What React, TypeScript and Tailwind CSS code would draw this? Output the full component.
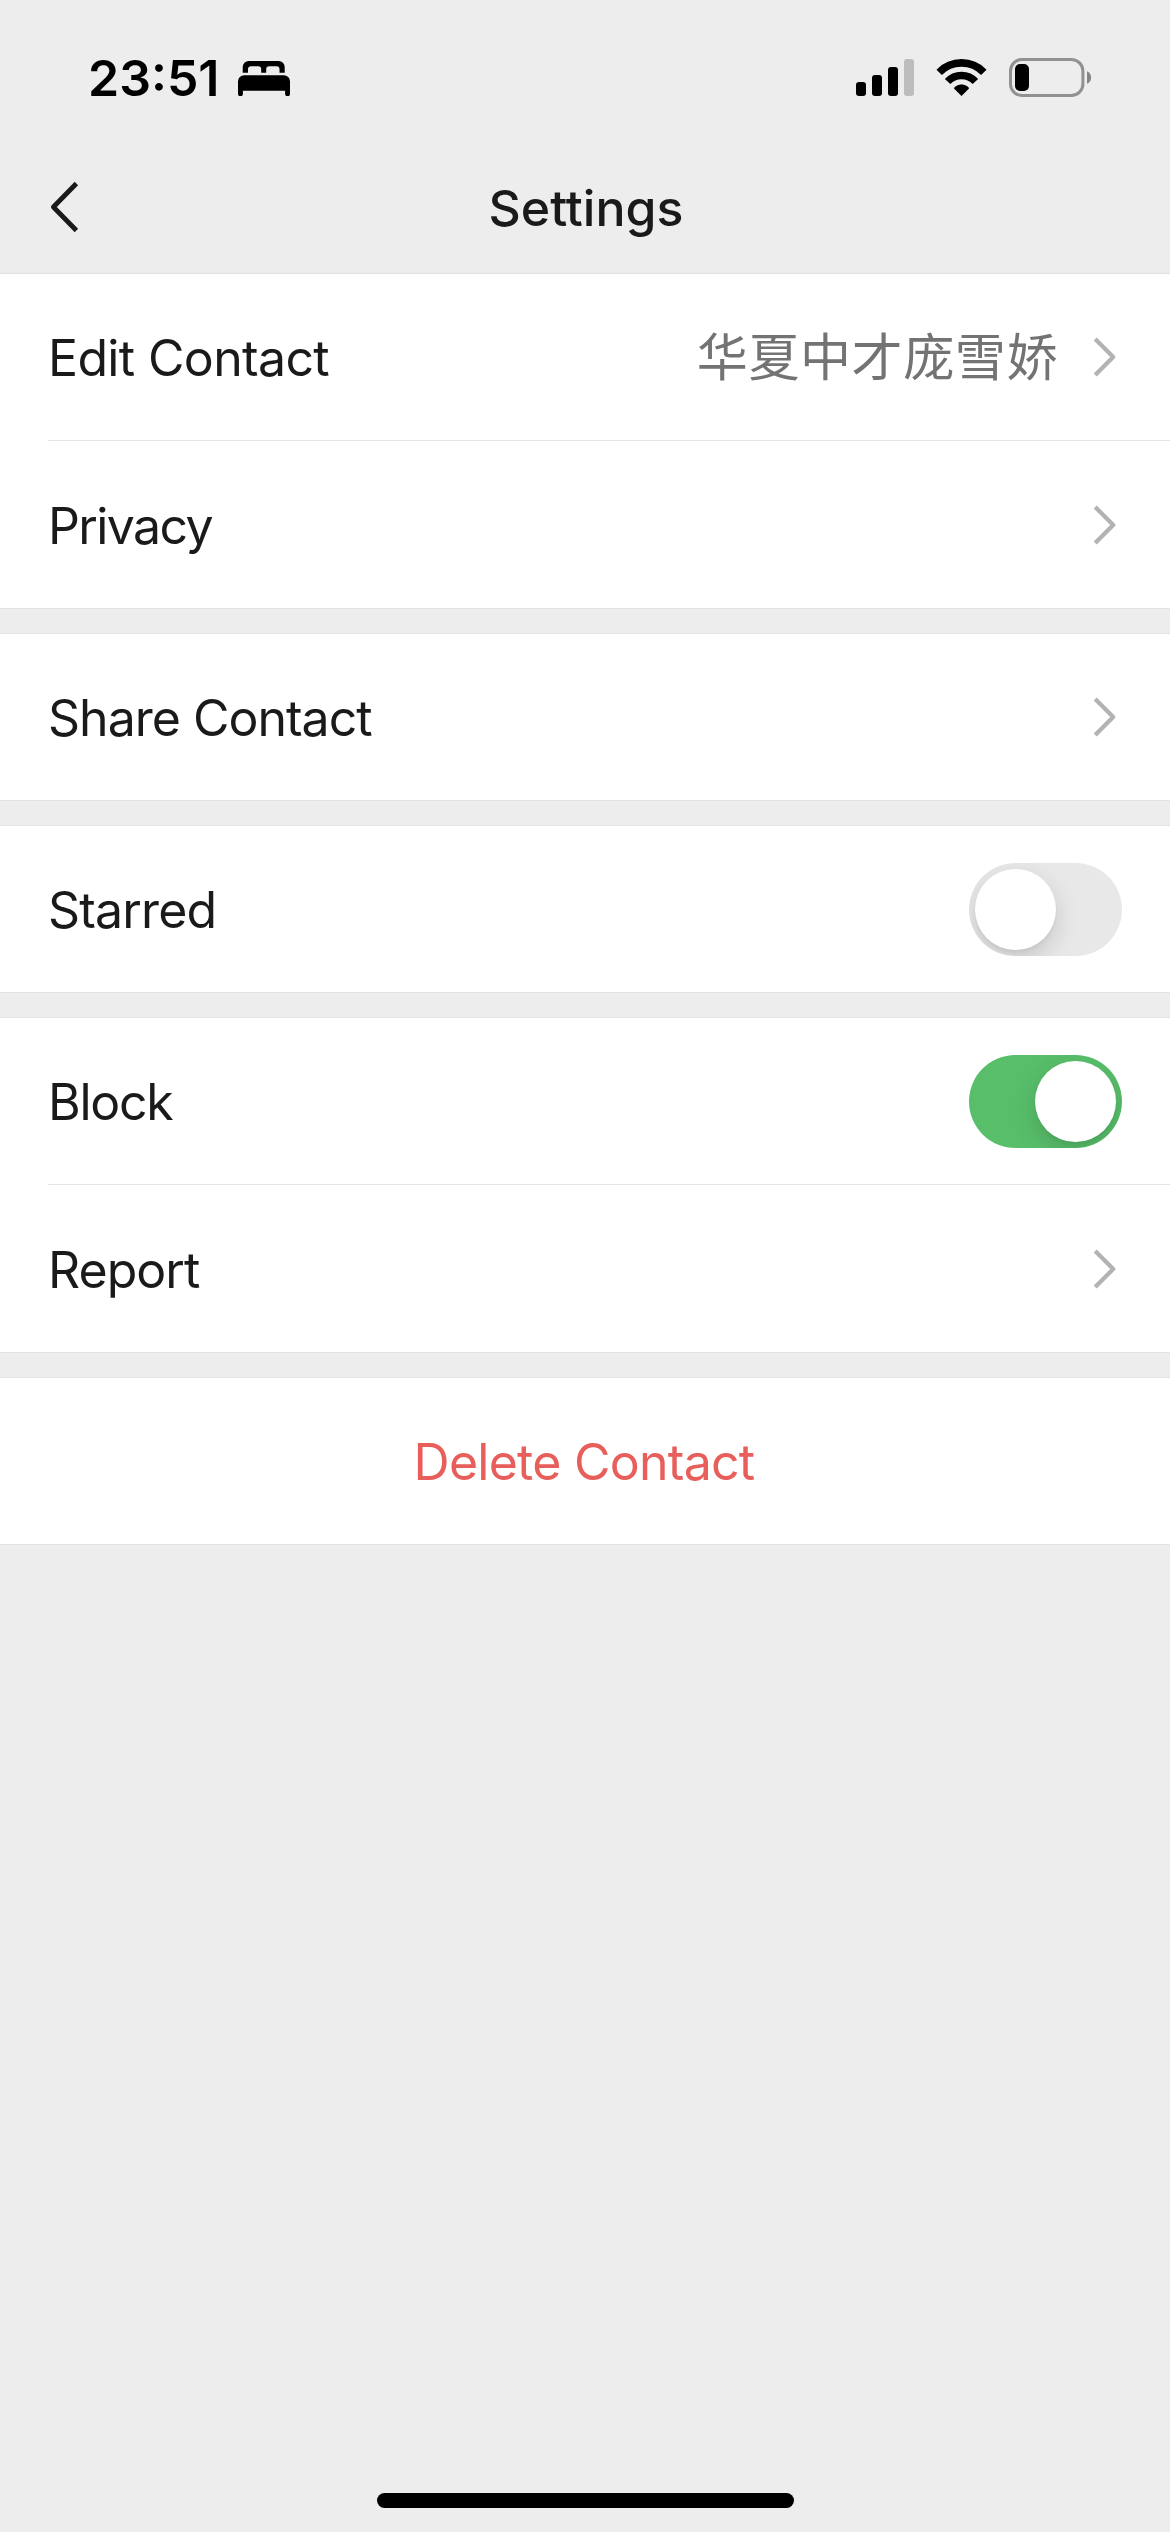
import { useState } from "react"
import { clsx } from "clsx"

const StatusBar = () => (
  <div className="flex h-[141px] items-start justify-between pl-[88px] pr-[79px]">
    <div className="flex items-start pt-12">
      <span className="w-[150px] text-[50px] font-semibold leading-[60px] text-black">23:51</span>
      {/* Sleep focus */}
      <svg className="mt-[13px] h-[35px] w-[52px]" viewBox="0 0 52 35" fill="#000">
        <path d="M4.7 11.7V6a6 6 0 0 1 6-6h30a6 6 0 0 1 6 6v5.7h-5.2V8.2a3 3 0 0 0-3-3h-7.3a3 3 0 0 0-3 3v3.5h-5V8.2a3 3 0 0 0-3-3H13a3 3 0 0 0-3 3v3.5Z" />
        <path d="M0 20.5a6.2 6.2 0 0 1 6.2-6.2h39.6a6.2 6.2 0 0 1 6.2 6.2v12.3a2.4 2.4 0 0 1-4.9 0v-3.1H4.9v3.1a2.4 2.4 0 0 1-4.9 0Z" />
      </svg>
    </div>

    <div className="flex items-center gap-[22px] pt-[58px]">
      {/* Signal */}
      <svg className="h-[39px] w-[58px]" viewBox="0 0 58 39">
        <rect x="0" y="24" width="10" height="14" rx="3" />
        <rect x="16" y="17" width="10" height="21" rx="3" />
        <rect x="32" y="9" width="10" height="29" rx="3" />
        <rect x="48" y="1" width="10" height="37" rx="3" fill="#bdbdbd" />
      </svg>
      {/* Wi-Fi */}
      <svg className="h-[39px] w-[51px]" viewBox="0 0 51 39" fill="none" stroke="#000">
        <path d="M3.2 14.3a31.2 31.2 0 0 1 44.6 0" strokeWidth="7.6" />
        <path d="M11.6 23.6a19 19 0 0 1 27.8 0" strokeWidth="7.4" />
        <path d="M25.5 37.9 18 30.6c0-1.6 3.8-4 7.5-4s7.5 2.4 7.5 4Z" fill="#000" stroke="none" />
      </svg>
      {/* Battery */}
      <svg className="h-[39px] w-[82px]" viewBox="0 0 82 39">
        <rect x="1.5" y="1.5" width="72.4" height="36" rx="11.5" fill="none" stroke="#919191" strokeWidth="3" />
        <rect x="6" y="6" width="14" height="27" rx="5" />
        <path d="M78 13.2c2.6 1 4.1 3.5 4.1 6.3s-1.500 5.300-4.100 6.300Z" fill="#858585" />
      </svg>
    </div>
  </div>
)

const NavBar = () => (
  <div className="grid h-[132px] grid-cols-[1fr_auto_1fr] items-center">
    <button className="pl-[50px]" aria-label="Back">
      <svg className="h-[52px] w-[30px]" viewBox="0 0 30 52" fill="none" stroke="#1a1a1a" strokeWidth="4.8" strokeLinejoin="round">
        <path d="M26.4 2.500 3.400 26l23 23.500" />
      </svg>
    </button>
    <h1 className="pl-0.5 pt-0.5 text-[50px] font-medium leading-[60px]">Settings</h1>
  </div>
)

const Chevron = () => (
  <svg className="h-[42px] w-6 shrink-0" viewBox="0 0 24 42" fill="none" stroke="#b2b2b2" strokeWidth="4.200" strokeLinejoin="round">
    <path d="M2.200 3l18 18-18 18" />
  </svg>
)

function Toggle({ label, initial = false }: { label: string; initial?: boolean }) {
  const [on, setOn] = useState(initial)
  return (
    <button
      role="switch"
      aria-checked={on}
      aria-label={label}
      onClick={() => setOn(!on)}
      className={clsx(
        "mt-px flex h-[93px] w-[153px] items-center overflow-hidden rounded-full px-1.5",
        on ? "justify-end bg-[#58be6a]" : "justify-start bg-[#e8e8e8]"
      )}
    >
      <span className="size-[81px] rounded-full bg-white shadow-[0_9px_24px_rgba(0,0,0,0.15),0_3px_3px_rgba(0,0,0,0.04)]" />
    </button>
  )
}

type RowProps = {
  label: string
  tracking: string
  children: React.ReactNode
  divider?: boolean
  tall?: boolean
}

const Row = ({ label, tracking, children, divider, tall }: RowProps) => (
  <div className="pl-12">
    <div className={clsx("flex items-center justify-between", tall ? "h-[167px]" : "h-[166px]")}>
      <span className={clsx("pt-0.5 text-[50px] leading-[60px]", tracking)}>{label}</span>
      {children}
    </div>
    {divider && <div className="h-px bg-[#e5e5e5]" />}
  </div>
)

const Group = ({ children, first }: { children: React.ReactNode; first?: boolean }) => (
  <section className={clsx("border-b border-[#e2e2e2] bg-white", !first && "mt-6 border-t")}>{children}</section>
)

export default function App() {
  return (
    <div className="flex h-[2532px] w-[1170px] flex-col bg-[#ededed] font-['Inter','Noto_Sans_CJK_SC',sans-serif] text-[#1a1a1a]">
      <header className="border-b border-[#e0e0e0]">
        <StatusBar />
        <NavBar />
      </header>

      <main className="flex-1">
        <Group first>
          <Row label="Edit Contact" tracking="tracking-[-0.65px]" divider>
            <div className="flex items-center gap-[35px] pr-[53px]">
              <span className="pt-0.5 text-[51px] leading-[60px] tracking-[0.6px] text-[#737373]">华夏中才庞雪娇</span>
              <Chevron />
            </div>
          </Row>
          <Row label="Privacy" tracking="tracking-[-1.6px]" tall>
            <div className="pr-[53px]"><Chevron /></div>
          </Row>
        </Group>

        <Group>
          <Row label="Share Contact" tracking="tracking-[-1px]">
            <div className="pr-[53px]"><Chevron /></div>
          </Row>
        </Group>

        <Group>
          <Row label="Starred" tracking="tracking-[-0.83px]">
            <div className="pr-12"><Toggle label="Starred" /></div>
          </Row>
        </Group>

        <Group>
          <Row label="Block" tracking="tracking-[-1.27px]" divider>
            <div className="pr-12"><Toggle label="Block" initial /></div>
          </Row>
          <Row label="Report" tracking="tracking-[-0.96px]" tall>
            <div className="pr-[53px]"><Chevron /></div>
          </Row>
        </Group>

        <Group>
          <button className="flex h-[166px] w-full items-center justify-center pr-0.5 pt-0.5 text-[50px] leading-[60px] tracking-[-0.74px] text-[#e85e5a]">
            Delete Contact
          </button>
        </Group>
      </main>

      {/* Home indicator */}
      <div className="mx-auto mb-6 h-[15px] w-[417px] rounded-full bg-black" />
    </div>
  )
}
